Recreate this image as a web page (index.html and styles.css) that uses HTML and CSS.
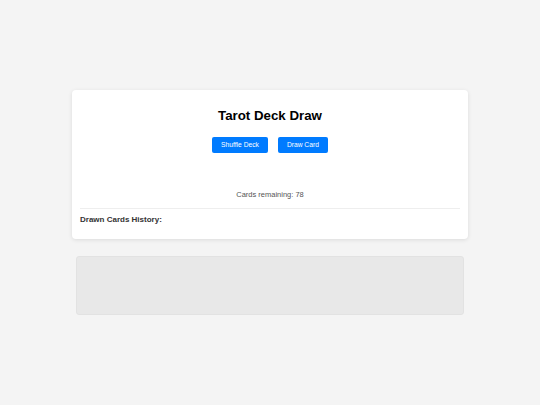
FILE: index.html
```html
<!DOCTYPE html>
<html lang="en">
<head>
<meta charset="utf-8">
<title>Tarot Deck Draw</title>
<link rel="stylesheet" href="styles.css">
</head>
<body>
  <main class="page">
    <section class="card">
      <h1 class="title">Tarot Deck Draw</h1>
      <div class="controls">
        <button class="btn">Shuffle Deck</button>
        <button class="btn">Draw Card</button>
      </div>
      <div class="drawn-area"></div>
      <p class="remaining">Cards remaining: 78</p>
      <div class="history">
        <h2 class="history-title">Drawn Cards History:</h2>
      </div>
    </section>
    <section class="panel"></section>
  </main>
</body>
</html>
```

FILE: styles.css
```css
html, body {
  margin: 0;
  padding: 0;
}

body {
  background: #f4f4f4;
  font-family: "Liberation Sans", Arial, sans-serif;
  color: #222;
}

.page {
  min-height: 100vh;
  display: flex;
  flex-direction: column;
  align-items: center;
  justify-content: center;
}

.card {
  box-sizing: border-box;
  width: 396px;
  padding: 8px;
  background: #ffffff;
  border-radius: 4px;
  box-shadow: 0 1px 4px rgba(0, 0, 0, 0.1);
}

.title {
  margin: 10px 0 0;
  font-size: 13.3px;
  line-height: 16px;
  font-weight: bold;
  text-align: center;
  color: #000;
}

.controls {
  margin-top: 13px;
  display: flex;
  justify-content: center;
  gap: 10px;
}

.btn {
  font-family: "Liberation Sans", Arial, sans-serif;
  font-size: 6.7px;
  line-height: 8px;
  padding: 4px 9px;
  border: none;
  border-radius: 2px;
  background: #007bff;
  color: #ffffff;
}

.drawn-area {
  height: 37px;
}

.remaining {
  margin: 0;
  font-size: 7.5px;
  line-height: 9px;
  text-align: center;
  color: #555;
}

.history {
  margin-top: 9px;
  border-top: 1px solid #eeeeee;
  padding-top: 6px;
  margin-bottom: 6px;
}

.history-title {
  margin: 0;
  font-size: 8px;
  line-height: 10px;
  font-weight: bold;
  color: #333;
}

.panel {
  box-sizing: border-box;
  width: 388px;
  height: 59px;
  margin-top: 17px;
  background: #e8e8e8;
  border: 1px solid #e2e2e2;
  border-radius: 3px;
}
```
